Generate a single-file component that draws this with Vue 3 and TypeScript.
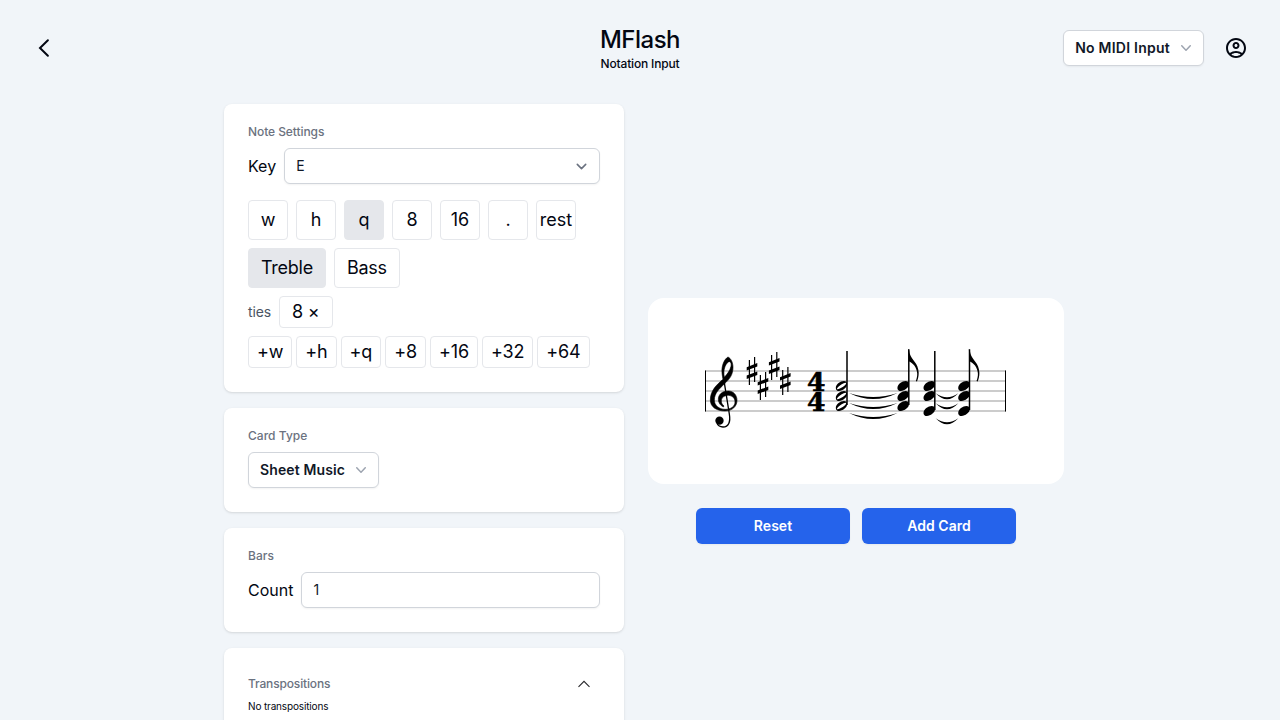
<script setup lang="ts">
import { ref } from 'vue'

const durations = ['w', 'h', 'q', '8', '16', '.', 'rest']
const duration = ref('q')
const clefs = ['Treble', 'Bass']
const clef = ref('Treble')
const tieOptions = ['+w', '+h', '+q', '+8', '+16', '+32', '+64']
const count = ref('1')

const staffLines = [371, 381, 391, 401, 411]

interface Point { x: number; y: number }

const sharps: Point[] = [
  { x: 752, y: 371 },
  { x: 763, y: 386 },
  { x: 774.2, y: 366 },
  { x: 785.3, y: 381 },
]

interface Chord { x: number; stem: number; top: number; ys: number[]; hollow: boolean; flag: boolean }

const chords: Chord[] = [
  { x: 841.5, stem: 847, top: 351, ys: [386, 396, 406], hollow: true, flag: false },
  { x: 903.2, stem: 908.8, top: 349.3, ys: [386, 396, 406], hollow: false, flag: true },
  { x: 929.3, stem: 934.8, top: 351, ys: [386, 396, 411], hollow: false, flag: false },
  { x: 964, stem: 969.5, top: 349.3, ys: [386, 396, 411], hollow: false, flag: true },
]

interface Tie { from: number; to: number; y: number }

const ties: Tie[] = [
  { from: 849, to: 897.5, y: 393 },
  { from: 849, to: 897.5, y: 403 },
  { from: 849, to: 897.5, y: 413 },
  { from: 935.7, to: 958.3, y: 393.3 },
  { from: 935.7, to: 958.3, y: 403.3 },
  { from: 935.7, to: 958.3, y: 418.3 },
]

function tiePath(t: Tie): string {
  const mid = (t.from + t.to) / 2
  return `M${t.from} ${t.y}Q${mid} ${t.y + 12} ${t.to} ${t.y}Q${mid} ${t.y + 8} ${t.from} ${t.y}Z`
}
</script>

<template>
  <div class="page">
    <header class="header">
      <button class="icon-btn back" aria-label="Back">
        <svg width="24" height="24" viewBox="0 0 24 24" fill="none" stroke="currentColor" stroke-width="2" stroke-linecap="round">
          <path d="M15.900 4.200 8 12l7.900 7.800" />
        </svg>
      </button>
      <div class="titles">
        <h1>MFlash</h1>
        <h2>Notation Input</h2>
      </div>
      <div class="actions">
        <button class="menu-btn midi">
          No MIDI Input
          <svg width="20" height="20" viewBox="0 0 20 20" fill="currentColor">
            <path d="M5.23 7.21a.75.75 0 0 1 1.06.02L10 11.17l3.71-3.94a.75.75 0 1 1 1.08 1.04l-4.25 4.5a.75.75 0 0 1-1.08 0l-4.25-4.5a.75.75 0 0 1 .02-1.06z" />
          </svg>
        </button>
        <button class="icon-btn" aria-label="Account">
          <svg width="24" height="24" viewBox="0 0 24 24" fill="currentColor">
            <path d="M12 2C6.48 2 2 6.48 2 12s4.48 10 10 10 10-4.48 10-10S17.52 2 12 2zM7.35 18.5C8.66 17.56 10.26 17 12 17s3.34.56 4.65 1.5c-1.31.94-2.91 1.5-4.65 1.5s-3.34-.56-4.65-1.5zm10.79-1.38C16.45 15.8 14.32 15 12 15s-4.45.8-6.14 2.12C4.7 15.73 4 13.95 4 12c0-4.42 3.58-8 8-8s8 3.58 8 8c0 1.95-.7 3.73-1.86 5.12zM12 6c-1.93 0-3.5 1.57-3.5 3.5S10.07 13 12 13s3.5-1.57 3.5-3.5S13.93 6 12 6zm0 5c-.83 0-1.5-.67-1.5-1.5S11.17 8 12 8s1.5.67 1.5 1.5S12.83 11 12 11z" />
          </svg>
        </button>
      </div>
    </header>

    <main class="content">
      <div class="settings">
        <section class="card">
          <h3>Note Settings</h3>
          <div class="field">
            <span>Key</span>
            <div class="control select">
              <span>E</span>
              <svg width="21" height="21" viewBox="0 0 20 20" fill="none" stroke="#6b7280" stroke-width="1.5" stroke-linecap="round" stroke-linejoin="round">
                <path d="M6 8l4 4 4-4" />
              </svg>
            </div>
          </div>
          <div class="row durations">
            <button
              v-for="d in durations"
              :key="d"
              class="toggle square"
              :class="{ active: d === duration }"
              @click="duration = d"
            >{{ d }}</button>
          </div>
          <div class="row">
            <button
              v-for="c in clefs"
              :key="c"
              class="toggle"
              :class="{ active: c === clef }"
              @click="clef = c"
            >{{ c }}</button>
          </div>
          <div class="row">
            <span class="ties-label">ties</span>
            <button class="toggle short">8 ×</button>
          </div>
          <div class="row tight">
            <button v-for="t in tieOptions" :key="t" class="toggle short slim">{{ t }}</button>
          </div>
        </section>

        <section class="card">
          <h3 class="plain">Card Type</h3>
          <button class="menu-btn">
            Sheet Music
            <svg width="20" height="20" viewBox="0 0 20 20" fill="currentColor">
              <path d="M5.23 7.21a.75.75 0 0 1 1.06.02L10 11.17l3.71-3.94a.75.75 0 1 1 1.08 1.04l-4.25 4.5a.75.75 0 0 1-1.08 0l-4.25-4.5a.75.75 0 0 1 .02-1.06z" />
            </svg>
          </button>
        </section>

        <section class="card">
          <h3 class="plain">Bars</h3>
          <div class="field">
            <span>Count</span>
            <input v-model="count" class="control" />
          </div>
        </section>

        <section class="card">
          <div class="collapse">
            <h3>Transpositions</h3>
            <svg width="16" height="16" viewBox="0 0 16 16" fill="none" stroke="#27272a" stroke-width="1.1">
              <path d="M2.5 10.8 8 5.3l5.5 5.5" />
            </svg>
          </div>
          <p class="note">No transpositions</p>
        </section>
      </div>

      <div class="preview">
        <div class="sheet">
          <svg width="416" height="186" viewBox="648 298 416 186">
            <path v-for="y in staffLines" :key="y" :d="`M705 ${y}H1006`" stroke="#999" />
            <path d="M705.5 370.5V411.5M1005.5 370.5V411.5" stroke="#000" />

            <!-- treble clef -->
            <g transform="translate(695 340) scale(.33333)">
              <path
                fill-rule="evenodd"
                stroke="#000"
                stroke-width="1.800"
                d="M99 51C88 57 79 78 81 98C81.500 106 83 112 84 118C65 134 46 152 46 180C46 201 65 213 90 213C112 213 126 199 126 181C126 165 115 153 100 153C82 153 70 163 70 178C70 189 76 196 85 201L87 198C81 193 79 188 79 183C79 173 88 166 100 166C112 167 120 174 120 186C120 199 108 208 91 208C72 208 58 196 58 180C58 160 73 146 89 131C104 117 114 104 114 82C114 68 108 55 99 51ZM104 65C109 67 109 74 108 79C105 92 97 102 88 112C86 100 86 90 90 80C94 71 99 64 104 65Z"
              />
              <path d="M86 116 103 222C107 246 101 261 84 261C75 261 69 257 66 250" fill="none" stroke="#000" stroke-width="4" />
              <circle cx="73.500" cy="242" r="12.500" />
            </g>

            <!-- key signature -->
            <g v-for="s in sharps" :key="s.x" :transform="`translate(${s.x} ${s.y})`">
              <path d="M-2.600-11V14M2.600-14V11" stroke="#000" stroke-width="1.200" />
              <path d="M-5.300-3.800 5.300-7.900V-4.500L-5.300-.5ZM-5.300 4.500 5.300.5V4L-5.300 8Z" />
            </g>

            <!-- time signature -->
            <text class="meter" x="816.300" y="390.600">4</text>
            <text class="meter" x="816.300" y="410.600">4</text>

            <!-- chords -->
            <g v-for="c in chords" :key="c.x">
              <path :d="`M${c.stem} ${c.top}V${c.ys[2] - 1}`" stroke="#000" stroke-width="1.500" />
              <g v-for="y in c.ys" :key="y" :transform="`translate(${c.x} ${y})`">
                <path
                  v-if="c.hollow"
                  fill-rule="evenodd"
                  d="M-5.700 1.900C-5.700-1.800-1-5 2.400-5C4.400-5 5.700-3.900 5.700-1.900C5.700 1.800 1 5-2.400 5C-4.400 5-5.700 3.900-5.700 1.900ZM-4.500 3.100C-3.500 4.600 4.800-.8 4.700-2.700C4.500-5-4.700.600-4.500 3.100Z"
                />
                <path
                  v-else
                  d="M-5.800 1.900C-5.800-1.800-1-5 2.400-5C4.400-5 5.800-3.900 5.800-1.900C5.800 1.800 1 5-2.400 5C-4.400 5-5.800 3.900-5.800 1.900Z"
                />
              </g>
              <path
                v-if="c.flag"
                :transform="`translate(${c.stem} ${c.top})`"
                d="M-.6-.4C.4-.4.400 2 1.100 4.800C2.600 10.500 9.700 14 9.900 23.500C9.900 26.800 9.200 29.800 8.200 32.300L7 31.800C8 29.300 8.500 26.800 8.400 24.300C8 18 4 13.500-.1 12Z"
              />
            </g>

            <path v-for="(t, i) in ties" :key="i" :d="tiePath(t)" />
          </svg>
        </div>
        <div class="buttons">
          <button class="primary">Reset</button>
          <button class="primary">Add Card</button>
        </div>
      </div>
    </main>
  </div>
</template>

<style>
body {
  margin: 0;
  background: #f1f5f9;
}
</style>

<style scoped>
.page,
.page * {
  box-sizing: border-box;
}
.page {
  height: 720px;
  overflow: hidden;
  background: #f1f5f9;
  color: #030712;
  font-family: Inter, "Liberation Sans", sans-serif;
  font-size: 16px;
  line-height: 24px;
}
button,
input {
  margin: 0;
  font-family: inherit;
  color: inherit;
}
h1,
h2,
h3,
p {
  margin: 0;
}
svg {
  display: block;
  flex: none;
}
.header {
  display: grid;
  grid-template-columns: 1fr auto 1fr;
  align-items: center;
  height: 96px;
  padding: 0 32px;
}
.icon-btn {
  width: 24px;
  height: 24px;
  padding: 0;
  border: 0;
  background: none;
}
.titles {
  text-align: center;
}
h1 {
  font-size: 24px;
  line-height: 32px;
  font-weight: 500;
  letter-spacing: -0.5px;
}
h2 {
  font-size: 12px;
  line-height: 16px;
  font-weight: 500;
  letter-spacing: -0.16px;
}
.actions {
  display: flex;
  align-items: center;
  justify-content: flex-end;
  gap: 20px;
}
.menu-btn {
  display: flex;
  align-items: center;
  gap: 6px;
  height: 36px;
  padding: 0 7px 0 11px;
  border: 1px solid #d1d5db;
  border-radius: 6px;
  background: #fff;
  box-shadow: 0 1px 2px rgb(0 0 0 / 5%);
  color: #111827;
  font-size: 14px;
  line-height: 20px;
  font-weight: 600;
  letter-spacing: 0.12px;
  white-space: nowrap;
}
.midi {
  letter-spacing: 0.24px;
}
.menu-btn svg {
  color: #9ca3af;
}
.content {
  display: flex;
  gap: 24px;
  width: 840px;
  margin: 8px 0 0 224px;
}
.settings {
  display: flex;
  flex-direction: column;
  gap: 16px;
  width: 400px;
}
.card {
  padding: 20px 24px 24px;
  border-radius: 8px;
  background: #fff;
  box-shadow: 0 1px 3px rgb(0 0 0 / 10%), 0 1px 2px -1px rgb(0 0 0 / 10%);
}
h3 {
  margin-bottom: 8px;
  color: #6b7280;
  font-size: 12px;
  line-height: 16px;
  font-weight: 500;
  letter-spacing: -0.08px;
}
.plain {
  letter-spacing: 0.03px;
}
.field {
  display: flex;
  align-items: center;
  gap: 8px;
}
.control {
  flex: 1;
  min-width: 0;
  height: 36px;
  padding: 0 11px;
  border: 1px solid #d1d5db;
  border-radius: 6px;
  background: #fff;
  box-shadow: 0 1px 2px rgb(0 0 0 / 5%);
  color: #111827;
  font-size: 14px;
  line-height: 20px;
}
input.control {
  padding-bottom: 1px;
}
.select {
  display: flex;
  align-items: center;
  justify-content: space-between;
  padding-right: 7px;
}
.row {
  display: flex;
  align-items: center;
  gap: 8px;
  margin-top: 8px;
}
.durations {
  margin-top: 16px;
}
.tight {
  gap: 4px;
}
.toggle {
  display: flex;
  align-items: center;
  justify-content: center;
  height: 40px;
  padding: 0 12px;
  border: 1px solid #e5e7eb;
  border-radius: 4px;
  background: #fff;
  font-size: 18px;
  line-height: 28px;
  letter-spacing: -0.25px;
  white-space: nowrap;
}
.square {
  width: 40px;
  padding: 0;
  letter-spacing: 0;
}
.short {
  height: 32px;
  letter-spacing: -0.15px;
}
.slim {
  padding: 0 8px;
}
.active {
  background: #e5e7eb;
}
.ties-label {
  color: #4b5563;
  font-size: 14px;
  letter-spacing: -0.15px;
}
.collapse {
  display: flex;
  align-items: center;
  justify-content: space-between;
  height: 32px;
  padding-right: 8px;
}
.collapse h3 {
  margin: 0;
  letter-spacing: -0.15px;
}
.note {
  height: 80px;
  font-size: 10px;
  line-height: 13px;
  letter-spacing: -0.15px;
}
.preview {
  width: 416px;
  margin-top: 194px;
}
.sheet {
  height: 186px;
  border-radius: 16px;
  background: #fff;
}
.meter {
  font-family: "DejaVu Serif", serif;
  font-size: 26.5px;
  font-weight: 700;
  text-anchor: middle;
  stroke: #000;
  stroke-width: 0.6px;
}
.buttons {
  display: flex;
  gap: 12px;
  margin: 24px 48px 0;
}
.primary {
  flex: 1;
  height: 36px;
  border: 0;
  border-radius: 6px;
  background: #2563eb;
  box-shadow: 0 1px 2px rgb(0 0 0 / 5%);
  color: #fff;
  font-size: 14px;
  line-height: 20px;
  font-weight: 600;
  letter-spacing: 0.05px;
}
</style>
